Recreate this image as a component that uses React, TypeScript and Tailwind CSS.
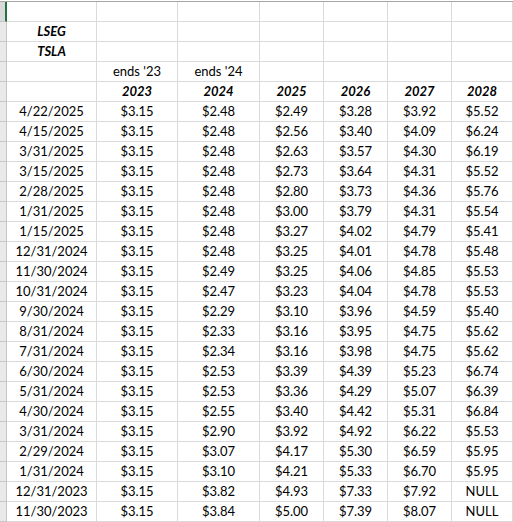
const rows: string[][] = [
  ["4/22/2025", "$3.15", "$2.48", "$2.49", "$3.28", "$3.92", "$5.52"],
  ["4/15/2025", "$3.15", "$2.48", "$2.56", "$3.40", "$4.09", "$6.24"],
  ["3/31/2025", "$3.15", "$2.48", "$2.63", "$3.57", "$4.30", "$6.19"],
  ["3/15/2025", "$3.15", "$2.48", "$2.73", "$3.64", "$4.31", "$5.52"],
  ["2/28/2025", "$3.15", "$2.48", "$2.80", "$3.73", "$4.36", "$5.76"],
  ["1/31/2025", "$3.15", "$2.48", "$3.00", "$3.79", "$4.31", "$5.54"],
  ["1/15/2025", "$3.15", "$2.48", "$3.27", "$4.02", "$4.79", "$5.41"],
  ["12/31/2024", "$3.15", "$2.48", "$3.25", "$4.01", "$4.78", "$5.48"],
  ["11/30/2024", "$3.15", "$2.49", "$3.25", "$4.06", "$4.85", "$5.53"],
  ["10/31/2024", "$3.15", "$2.47", "$3.23", "$4.04", "$4.78", "$5.53"],
  ["9/30/2024", "$3.15", "$2.29", "$3.10", "$3.96", "$4.59", "$5.40"],
  ["8/31/2024", "$3.15", "$2.33", "$3.16", "$3.95", "$4.75", "$5.62"],
  ["7/31/2024", "$3.15", "$2.34", "$3.16", "$3.98", "$4.75", "$5.62"],
  ["6/30/2024", "$3.15", "$2.53", "$3.39", "$4.39", "$5.23", "$6.74"],
  ["5/31/2024", "$3.15", "$2.53", "$3.36", "$4.29", "$5.07", "$6.39"],
  ["4/30/2024", "$3.15", "$2.55", "$3.40", "$4.42", "$5.31", "$6.84"],
  ["3/31/2024", "$3.15", "$2.90", "$3.92", "$4.92", "$6.22", "$5.53"],
  ["2/29/2024", "$3.15", "$3.07", "$4.17", "$5.30", "$6.59", "$5.95"],
  ["1/31/2024", "$3.15", "$3.10", "$4.21", "$5.33", "$6.70", "$5.95"],
  ["12/31/2023", "$3.15", "$3.82", "$4.93", "$7.33", "$7.92", "NULL"],
  ["11/30/2023", "$3.15", "$3.84", "$5.00", "$7.39", "$8.07", "NULL"],
];

const header: { cells: string[]; bold?: boolean }[] = [
  { cells: ["LSEG", "", "", "", "", "", ""], bold: true },
  { cells: ["TSLA", "", "", "", "", "", ""], bold: true },
  { cells: ["", "ends '23", "ends '24", "", "", "", ""] },
  { cells: ["", "2023", "2024", "2025", "2026", "2027", "2028"], bold: true },
];

const cols = "grid grid-cols-[7px_90px_81px_82px_64px_64px_64px_1fr]";
const cell = "border-r border-b border-[#dadada] flex items-center justify-center whitespace-nowrap overflow-hidden";

// the row-number column is scrolled almost out of view, only its edge shows
function RowHead({ first }: { first?: boolean }) {
  return (
    <div
      className={
        first
          ? "bg-[#d9d9d9] border-r-2 border-b border-r-[#217346] border-b-[#c6c6c6]"
          : "bg-[#e9e9e9] border-r border-b border-[#c6c6c6]"
      }
    />
  );
}

export default function App() {
  return (
    <div className="w-[513px] h-[522px] overflow-hidden bg-white pt-[1px] text-[13px] text-black font-['Lato',sans-serif]">
      <div className={`${cols} h-[21px] border-t border-[#a6a6a6]`}>
        <RowHead first />
        {[0, 1, 2, 3, 4, 5, 6].map((i) => (
          <div key={i} className={cell} />
        ))}
      </div>
      {header.map((r, ri) => (
        <div key={ri} className={`${cols} h-[20px]`}>
          <RowHead />
          {r.cells.map((c, ci) => (
            <div key={ci} className={`${cell} ${r.bold ? "font-bold italic" : ""}`}>
              {c}
            </div>
          ))}
        </div>
      ))}
      {rows.map((r, ri) => (
        <div key={ri} className={`${cols} h-[20px]`}>
          <RowHead />
          {r.map((c, ci) => (
            <div key={ci} className={cell}>
              {c}
            </div>
          ))}
        </div>
      ))}
    </div>
  );
}
